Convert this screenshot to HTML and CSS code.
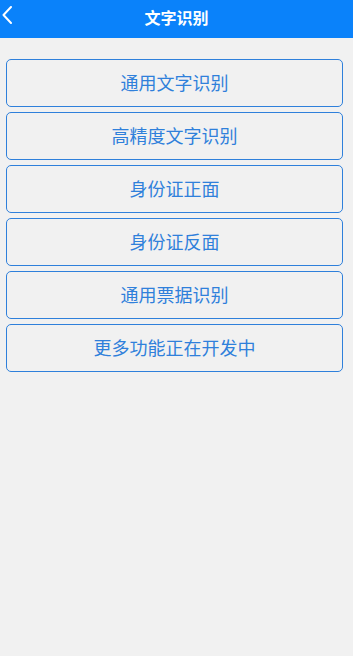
FILE: index.html
```html
<!DOCTYPE html>
<html lang="zh">
<head>
<meta charset="utf-8">
<title>文字识别</title>
<link rel="stylesheet" href="styles.css">
</head>
<body>
<header class="topbar">
  <a class="back" href="#">
    <svg width="10" height="18" viewBox="0 0 10 18"><path d="M9 1 L1.5 9 L9 17" fill="none" stroke="#fff" stroke-width="2" stroke-linecap="round" stroke-linejoin="round"/></svg>
  </a>
  <h1 class="title">文字识别</h1>
</header>
<main class="list">
  <button class="item">通用文字识别</button>
  <button class="item">高精度文字识别</button>
  <button class="item">身份证正面</button>
  <button class="item">身份证反面</button>
  <button class="item">通用票据识别</button>
  <button class="item">更多功能正在开发中</button>
</main>
</body>
</html>
```
FILE: styles.css
```css
html, body {
  margin: 0;
  padding: 0;
  background: #f1f1f1;
  font-family: "Noto Sans CJK SC", "Microsoft YaHei", sans-serif;
}
.topbar {
  position: relative;
  height: 38px;
  background: #0a82fa;
  display: flex;
  align-items: center;
  justify-content: center;
}
.back {
  position: absolute;
  left: 2px;
  top: 6px;
  display: block;
  line-height: 0;
}
.title {
  margin: 0;
  color: #fff;
  font-size: 16px;
  font-weight: bold;
  line-height: 38px;
  padding-bottom: 5px;
}
.list {
  display: flex;
  flex-direction: column;
  gap: 5px;
  padding: 21px 10px 0 6px;
}
.item {
  height: 48px;
  border: 1px solid #2f80db;
  border-radius: 5px;
  background: transparent;
  color: #2f80db;
  font-family: inherit;
  font-size: 18px;
  padding: 0;
  padding-bottom: 3px;
}
```
